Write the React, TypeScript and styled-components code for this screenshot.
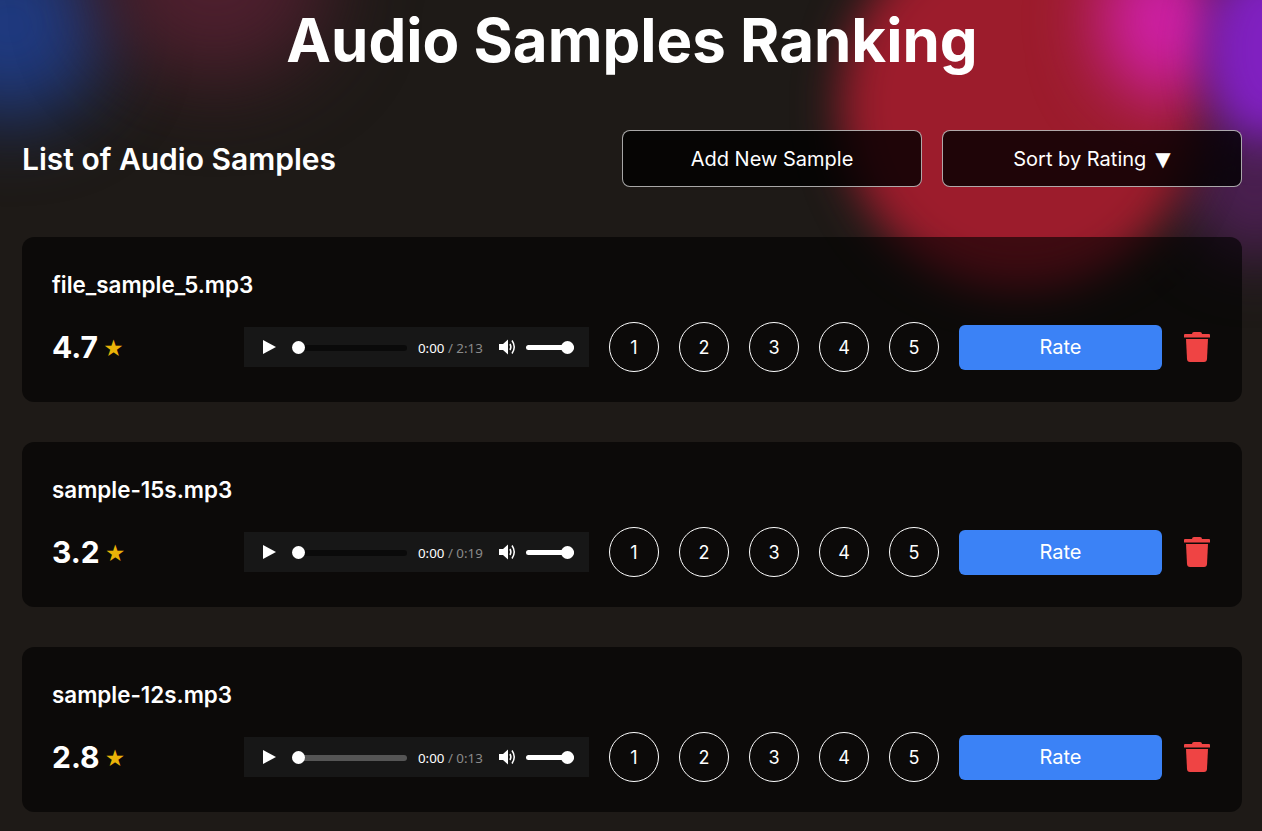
import styled, { createGlobalStyle } from "styled-components";

const samples = [
	{ name: "file_sample_5.mp3", rating: "4.7", duration: "2:13", buffered: 0 },
	{ name: "sample-15s.mp3", rating: "3.2", duration: "0:19", buffered: 0 },
	{ name: "sample-12s.mp3", rating: "2.8", duration: "0:13", buffered: 100 },
];

const Global = createGlobalStyle`
	html, body {
		margin: 0;
		padding: 0;
		background: #1e1a17;
		color: #fff;
		font-family: Inter, "Liberation Sans", sans-serif;
		overflow: hidden;
	}
`;

const Page = styled.div`
	position: relative;
	width: 1262px;
	height: 831px;
	overflow: hidden;
`;

const Backdrop = styled.div`
	position: absolute;
	inset: 0;
	overflow: hidden;
`;

const Blob = styled.div<{ $x: number; $y: number; $w: number; $h: number; $color: string; $blur: number }>`
	position: absolute;
	left: ${(p) => p.$x}px;
	top: ${(p) => p.$y}px;
	width: ${(p) => p.$w}px;
	height: ${(p) => p.$h}px;
	border-radius: 50%;
	background: ${(p) => p.$color};
	filter: blur(${(p) => p.$blur}px);
`;

const Content = styled.main`
	position: relative;
	display: flex;
	flex-direction: column;
	padding: 0 20px 0 22px;
`;

const Title = styled.h1`
	margin: 0;
	height: 84px;
	font-size: 60px;
	line-height: 80px;
	font-weight: 700;
	text-align: center;
`;

const Toolbar = styled.div`
	display: flex;
	align-items: center;
	gap: 20px;
	margin-top: 46px;
	height: 57px;
`;

const Heading = styled.h2`
	margin: 0 auto 0 0;
	font-size: 30px;
	font-weight: 600;
`;

const ToolButton = styled.button`
	box-sizing: border-box;
	width: 300px;
	height: 57px;
	border: 1px solid rgba(255, 255, 255, 0.65);
	border-radius: 8px;
	background: rgba(0, 0, 0, 0.8);
	color: #fff;
	font: 400 20px Inter, "Liberation Sans", sans-serif;
`;

const Caret = styled.span`
	margin-left: 9px;
	font-family: "DejaVu Sans", sans-serif;
	font-size: 20px;
`;

const List = styled.div`
	display: flex;
	flex-direction: column;
	gap: 40px;
	margin-top: 50px;
`;

const Card = styled.article`
	box-sizing: border-box;
	height: 165px;
	padding: 30px;
	border-radius: 12px;
	background: rgba(0, 0, 0, 0.6);
`;

const SampleName = styled.div`
	height: 36px;
	font-size: 22.4px;
	line-height: 36px;
	font-weight: 600;
`;

const Controls = styled.div`
	display: flex;
	align-items: center;
	margin-top: 19px;
	height: 50px;
`;

const Score = styled.div`
	display: flex;
	align-items: center;
	gap: 5px;
	width: 192px;
	font-size: 30px;
	font-weight: 700;
`;

const Star = styled.span`
	color: #eab308;
	font-size: 20px;
	line-height: 1;
	margin-top: 3px;
`;

const Player = styled.div`
	box-sizing: border-box;
	display: flex;
	align-items: center;
	width: 345px;
	height: 40px;
	padding-left: 19px;
	background: #171717;
	font-family: "Noto Sans", sans-serif;
`;

const Track = styled.div<{ $color: string; $width: number; $height: number }>`
	position: relative;
	width: ${(p) => p.$width}px;
	height: ${(p) => p.$height}px;
	margin-top: ${(p) => p.$height - 4}px;
	border-radius: 3px;
	background: ${(p) => p.$color};
`;

const Thumb = styled.span<{ $left: number }>`
	position: absolute;
	left: ${(p) => p.$left}px;
	top: -4px;
	width: 13px;
	height: 13px;
	border-radius: 50%;
	background: #fff;
`;

const Time = styled.span`
	margin: 2px 0 0 11px;
	width: 66px;
	font-size: 13.33px;
	white-space: nowrap;
	color: #fff;
`;

const Total = styled.span`
	color: #8a8a8a;
`;

const Speaker = styled.svg`
	margin: 0 10px 0 15px;
	flex: none;
`;

const Votes = styled.div`
	display: flex;
	gap: 20px;
	margin-left: 20px;
`;

const Vote = styled.button`
	box-sizing: border-box;
	width: 50px;
	height: 50px;
	padding: 0;
	border: 1px solid #fff;
	border-radius: 50%;
	background: transparent;
	color: #fff;
	font: 400 18px Inter, "Liberation Sans", sans-serif;
`;

const RateButton = styled.button`
	width: 203px;
	height: 45px;
	margin-left: 20px;
	border: 0;
	border-radius: 6px;
	background: #3b82f6;
	color: #fff;
	font: 400 20px Inter, "Liberation Sans", sans-serif;
`;

const TrashButton = styled.button`
	display: flex;
	margin-left: 22px;
	padding: 0;
	border: 0;
	background: none;
`;

const PlayIcon = () => (
	<svg width="13" height="14" viewBox="0 0 13 14" style={{ flex: "none", marginRight: 16 }}>
		<path d="M0 0 L13 7 L0 14 Z" fill="#fff" />
	</svg>
);

const SpeakerIcon = () => (
	<Speaker width="17" height="16" viewBox="0 0 17 16">
		<path d="M0 5 H4 L9 0.5 V15.5 L4 11 H0 Z" fill="#fff" />
		<path d="M11 5 Q12.8 8 11 11" stroke="#fff" strokeWidth="1.5" fill="none" />
		<path d="M13 1.5 Q17.5 8 13 14.5" stroke="#fff" strokeWidth="1.5" fill="none" />
	</Speaker>
);

const TrashIcon = () => (
	<svg width="26" height="30" viewBox="0 0 26 30">
		<path d="M8 2 Q8 0 10 0 H16 Q18 0 18 2 H25 Q26 2 26 3 V5.500 H0 V3 Q0 2 1 2 Z" fill="#ef4444" />
		<path d="M2 7 H24 L23 27 Q22.800 30 20 30 H6 Q3.200 30 3 27 Z" fill="#ef4444" />
	</svg>
);

const AudioPlayer = (props: { duration: string; buffered: number }) => (
	<Player>
		<PlayIcon />
		<Track $color={props.buffered ? "#555" : "#0a0a0a"} $width={115} $height={6}>
			<Thumb $left={0} />
		</Track>
		<Time>
			0:00 <Total>/ {props.duration}</Total>
		</Time>
		<SpeakerIcon />
		<Track $color="#fff" $width={48} $height={5}>
			<Thumb $left={35} />
		</Track>
	</Player>
);

export default function App() {
	return (
		<Page>
			<Global />
			<Backdrop>
				<Blob $x={-90} $y={-70} $w={200} $h={190} $color="#1f3a80" $blur={38} />
				<Blob $x={100} $y={-120} $w={230} $h={200} $color="#4e1f2e" $blur={42} />
				<Blob $x={1180} $y={60} $w={150} $h={200} $color="#4a1f50" $blur={30} />
				<Blob $x={840} $y={-80} $w={360} $h={370} $color="#9c1c2c" $blur={22} />
				<Blob $x={1100} $y={-60} $w={130} $h={160} $color="#d020a8" $blur={34} />
				<Blob $x={1205} $y={-40} $w={120} $h={180} $color="#8020c0" $blur={20} />
			</Backdrop>
			<Content>
				<Title>Audio Samples Ranking</Title>
				<Toolbar>
					<Heading>List of Audio Samples</Heading>
					<ToolButton>Add New Sample</ToolButton>
					<ToolButton>
						Sort by Rating<Caret>▼</Caret>
					</ToolButton>
				</Toolbar>
				<List>
					{samples.map((sample) => (
						<Card key={sample.name}>
							<SampleName>{sample.name}</SampleName>
							<Controls>
								<Score>
									{sample.rating}
									<Star>★</Star>
								</Score>
								<AudioPlayer duration={sample.duration} buffered={sample.buffered} />
								<Votes>
									{[1, 2, 3, 4, 5].map((n) => (
										<Vote key={n}>{n}</Vote>
									))}
								</Votes>
								<RateButton>Rate</RateButton>
								<TrashButton aria-label="Delete">
									<TrashIcon />
								</TrashButton>
							</Controls>
						</Card>
					))}
				</List>
			</Content>
		</Page>
	);
}
